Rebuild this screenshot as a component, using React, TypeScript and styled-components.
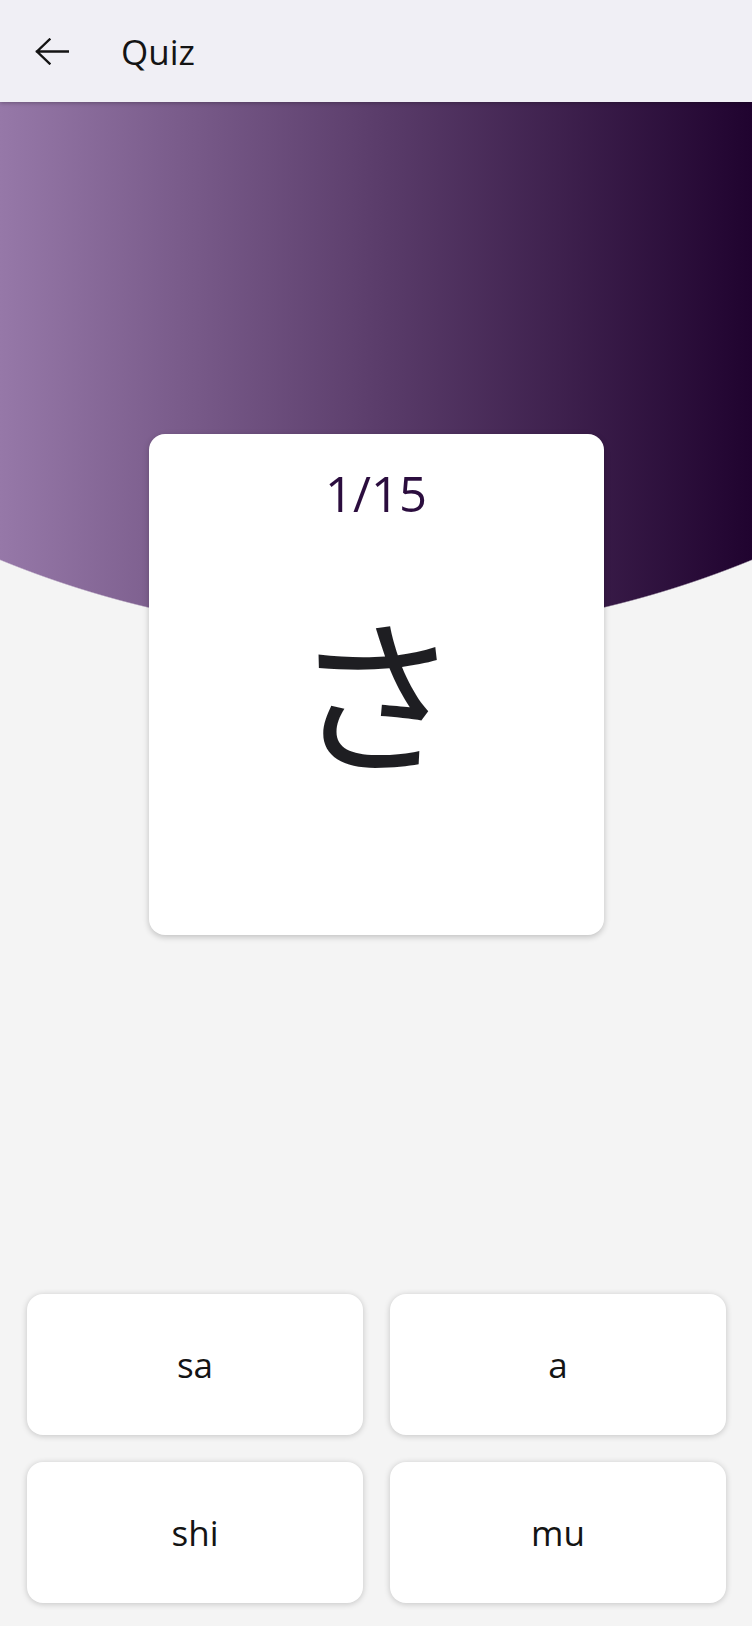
import React from "react";
import styled, { createGlobalStyle } from "styled-components";

const GlobalStyle = createGlobalStyle`
  html, body {
    margin: 0;
    padding: 0;
  }
  body {
    font-family: "Open Sans", "Noto Sans", sans-serif;
    background: #f4f4f4;
  }
  * { box-sizing: border-box; }
`;

const Page = styled.div`
  display: flex;
  flex-direction: column;
  min-height: 100vh;
  width: 752px;
`;

const Header = styled.header`
  position: relative;
  z-index: 2;
  height: 102px;
  flex: 0 0 auto;
  display: flex;
  align-items: center;
  gap: 52px;
  padding: 1px 0 0 35px;
  background: #f0eff5;
  box-shadow: 0 1px 4px rgba(0, 0, 0, 0.28);
`;

const BackButton = styled.button`
  display: flex;
  align-items: center;
  justify-content: center;
  border: 0;
  padding: 0;
  background: transparent;
  color: #141414;
  cursor: pointer;
`;

const Title = styled.h1`
  margin: 0;
  font-family: "Open Sans", "Noto Sans", sans-serif;
  font-weight: 400;
  font-size: 35px;
  line-height: 1;
  color: #141414;
`;

const Main = styled.main`
  flex: 1 1 auto;
  display: flex;
  flex-direction: column;
  background:
    radial-gradient(circle 990px at 50% -458px, transparent 989.3px, #f4f4f4 990.7px),
    linear-gradient(to right, #9678a8 0%, #5b3d6b 50%, #20032f 100%);
`;

const Card = styled.section`
  width: 455px;
  height: 501px;
  margin: 332px auto 0;
  padding-top: 30px;
  display: flex;
  flex-direction: column;
  align-items: center;
  background: #ffffff;
  border-radius: 16px;
  box-shadow: 0 2px 6px rgba(0, 0, 0, 0.22);
`;

const Counter = styled.div`
  font-family: "Open Sans", "Noto Sans", sans-serif;
  font-size: 49px;
  line-height: 58px;
  color: #2b0d3e;
`;

const Kana = styled.div`
  margin-top: 82px;
  font-family: "Noto Sans CJK JP", "Noto Sans CJK SC", sans-serif;
  font-size: 168px;
  line-height: 1;
  color: #1e1e22;
`;

const Answers = styled.div`
  margin-top: auto;
  display: grid;
  grid-template-columns: 336px 336px;
  grid-auto-rows: 141px;
  gap: 27px;
  padding: 0 26px 23px 27px;
`;

const AnswerButton = styled.button`
  display: flex;
  align-items: center;
  justify-content: center;
  border: 0;
  border-radius: 16px;
  background: #ffffff;
  box-shadow: 0 1px 6px rgba(0, 0, 0, 0.2);
  font-family: "Open Sans", "Noto Sans", sans-serif;
  font-size: 35px;
  color: #141414;
  cursor: pointer;
`;

const BackArrow = () => (
  <svg width="34" height="27" viewBox="0 0 34 27" fill="none">
    <path
      d="M2 13.5 H33 M14.5 1.5 L2 13.5 L14.5 25.5"
      stroke="currentColor"
      strokeWidth="2.4"
      strokeLinecap="square"
      strokeLinejoin="miter"
    />
  </svg>
);

const answers = ["sa", "a", "shi", "mu"];

export default function App() {
  return (
    <>
      <GlobalStyle />
      <Page>
        <Header>
          <BackButton aria-label="Back">
            <BackArrow />
          </BackButton>
          <Title>Quiz</Title>
        </Header>
        <Main>
          <Card>
            <Counter>1/15</Counter>
            <Kana>さ</Kana>
          </Card>
          <Answers>
            {answers.map((a) => (
              <AnswerButton key={a}>{a}</AnswerButton>
            ))}
          </Answers>
        </Main>
      </Page>
    </>
  );
}
